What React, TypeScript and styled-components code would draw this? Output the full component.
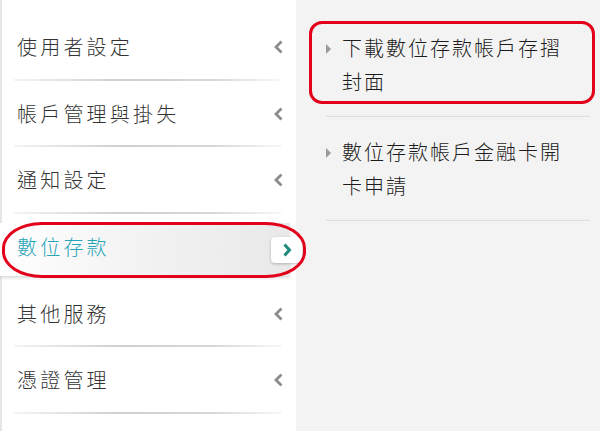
import React from "react";
import styled, { createGlobalStyle } from "styled-components";

const GlobalStyle = createGlobalStyle`
  html, body {
    margin: 0;
    padding: 0;
    background: #f3f3f3;
  }
  body {
    font-family: "Noto Sans CJK TC", "Noto Sans", sans-serif;
    font-weight: 300;
  }
`;

const Page = styled.div`
  position: relative;
  width: 600px;
  height: 431px;
  display: flex;
  overflow: hidden;
`;

const SideMenu = styled.ul`
  width: 296px;
  margin: 0;
  padding: 14px 0 0;
  list-style: none;
  background: #fff;
  border-left: 2px solid #e6e6e6;
  box-sizing: border-box;
  position: relative;
  z-index: 1;
`;

const MenuRow = styled.li<{ $active?: boolean }>`
  position: relative;
  height: 66.6px;
  display: flex;
  align-items: center;
  padding-left: 15px;
  font-size: 20px;
  letter-spacing: 3.2px;
  color: ${(p) => (p.$active ? "#27a5b8" : "#333")};

  &::before {
    content: "";
    display: ${(p) => (p.$active ? "block" : "none")};
    position: absolute;
    left: -2px;
    right: 6px;
    top: 9px;
    bottom: 4px;
    background: linear-gradient(to right, #ffffff 0%, #f3f3f3 45%, #e9e9e9 100%);
    box-shadow: 0 2px 3px rgba(0, 0, 0, 0.14);
  }

  &::after {
    content: "";
    position: absolute;
    left: 12px;
    right: 14px;
    bottom: 0;
    height: 2px;
    background: linear-gradient(to right, rgba(200, 200, 200, 0.2), #cfcfcf 40%, #d8d8d8 75%, rgba(220, 220, 220, 0.2));
    display: ${(p) => (p.$active ? "none" : "block")};
  }
`;

const RowLabel = styled.span`
  position: relative;
  flex: 1;
  margin-top: -1px;
`;

const Chevron = styled.span`
  position: relative;
  width: 12px;
  height: 14px;
  margin-right: 12px;
  display: flex;
  align-items: center;
  justify-content: center;
`;

const ActiveButton = styled.span`
  position: absolute;
  right: -6px;
  top: 23px;
  width: 31px;
  height: 26px;
  border-radius: 4px;
  background: #fff;
  box-shadow: 0 1px 3px rgba(0, 0, 0, 0.25);
  display: flex;
  align-items: center;
  justify-content: center;
`;

const SubPanel = styled.div`
  flex: 1;
  background: #f3f3f3;
  padding: 14px 10px 0 30px;
`;

const SubItem = styled.div`
  position: relative;
  display: flex;
  align-items: flex-start;
  padding: 17px 0 16px;

  &::after {
    content: "";
    position: absolute;
    left: 0;
    right: 0;
    bottom: -2px;
    height: 2px;
    background: linear-gradient(to bottom, #fafafa, #d4d4d4);
  }
  & + & {
    margin-top: 3px;
  }
`;

const Marker = styled.span`
  width: 0;
  height: 0;
  margin-top: 13px;
  margin-right: 11px;
  border-top: 5px solid transparent;
  border-bottom: 5px solid transparent;
  border-left: 5px solid #9a9a9a;
`;

const SubLabel = styled.span`
  width: 232px;
  font-size: 20px;
  line-height: 34px;
  letter-spacing: 2px;
  color: #1c1c1c;
`;

const Annotation = styled.div<{ $left: number; $top: number; $w: number; $h: number; $radius: string }>`
  position: absolute;
  left: ${(p) => p.$left}px;
  top: ${(p) => p.$top}px;
  width: ${(p) => p.$w}px;
  height: ${(p) => p.$h}px;
  border: 3px solid #e2001a;
  border-radius: ${(p) => p.$radius};
  box-sizing: border-box;
  pointer-events: none;
  z-index: 5;
`;

const menu = ["使用者設定", "帳戶管理與掛失", "通知設定", "數位存款", "其他服務", "憑證管理"];
const subItems = ["下載數位存款帳戶存摺封面", "數位存款帳戶金融卡開卡申請"];

const LeftArrow = () => (
  <svg width="11" height="14" viewBox="0 0 11 14">
    <polyline points="8.5,1.5 3,7 8.5,12.5" fill="none" stroke="#8c8c8c" strokeWidth="2.8" />
  </svg>
);

const RightArrow = () => (
  <svg width="10" height="14" viewBox="0 0 10 14">
    <polyline points="2.5,1.5 7.5,7 2.5,12.5" fill="none" stroke="#1b8a7c" strokeWidth="3" />
  </svg>
);

export default function App() {
  return (
    <Page>
      <GlobalStyle />
      <SideMenu>
        {menu.map((label) => {
          const active = label === "數位存款";
          return (
            <MenuRow key={label} $active={active}>
              <RowLabel>{label}</RowLabel>
              {active ? (
                <ActiveButton>
                  <RightArrow />
                </ActiveButton>
              ) : (
                <Chevron>
                  <LeftArrow />
                </Chevron>
              )}
            </MenuRow>
          );
        })}
      </SideMenu>
      <SubPanel>
        {subItems.map((label) => (
          <SubItem key={label}>
            <Marker />
            <SubLabel>{label}</SubLabel>
          </SubItem>
        ))}
      </SubPanel>
      <Annotation $left={2} $top={222} $w={304} $h={56} $radius="40px / 26px" />
      <Annotation $left={309} $top={21} $w={286} $h={83} $radius="13px" />
    </Page>
  );
}
